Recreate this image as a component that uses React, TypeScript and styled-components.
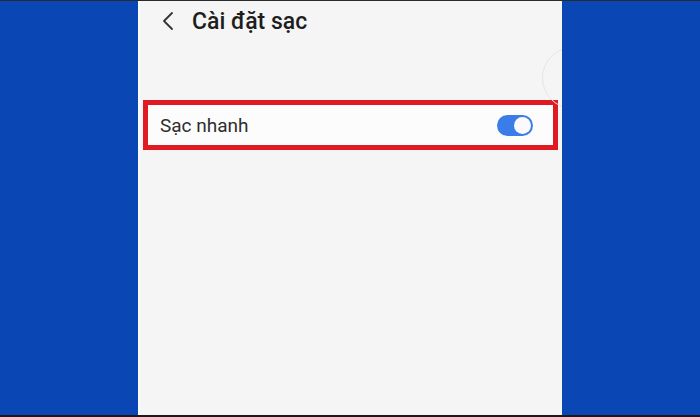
import React from "react";
import styled, { createGlobalStyle } from "styled-components";

const Global = createGlobalStyle`
  html, body { margin: 0; padding: 0; }
  body { background: #0b47b4; font-family: Roboto, "Noto Sans", Arial, sans-serif; }
`;

const Stage = styled.div`
  width: 700px;
  height: 417px;
  background: #0b47b4;
  display: flex;
  justify-content: center;
  box-sizing: border-box;
  border-bottom: 2px solid #1a1a1a;
  border-top: 1px solid #2a2a2a;
`;

const Phone = styled.div`
  position: relative;
  width: 424px;
  background: #f5f5f5;
  border-left: 2px solid #fbfbfb;
  box-sizing: border-box;
  display: flex;
  flex-direction: column;
  overflow: hidden;
`;

const Header = styled.div`
  display: flex;
  align-items: center;
  height: 40px;
  padding-left: 22px;
  gap: 18px;
`;

const Title = styled.h1`
  margin: 0;
  font-family: Roboto, "Noto Sans", sans-serif;
  font-weight: 500;
  font-size: 23px;
  color: #1e1e1e;
`;

const Body = styled.div`
  padding: 59px 4px 0 3px;
`;

const Highlight = styled.div`
  border: 5px solid #df1a22;
  height: 50px;
  box-sizing: border-box;
  background: #fcfcfc;
  display: flex;
  align-items: center;
  justify-content: space-between;
  padding: 0 20px 0 12px;
`;

const Label = styled.span`
  font-family: Roboto, "Noto Sans", sans-serif;
  font-size: 19px;
  color: #2e2e2e;
`;

const Toggle = styled.div`
  width: 36px;
  height: 21px;
  border-radius: 11px;
  background: #3b7de8;
  position: relative;
`;

const Knob = styled.div`
  position: absolute;
  right: 2px;
  top: 2px;
  width: 17px;
  height: 17px;
  border-radius: 50%;
  background: #fafafa;
`;

const Ghost = styled.div`
  position: absolute;
  right: -42px;
  top: 46px;
  width: 60px;
  height: 60px;
  border-radius: 50%;
  border: 1px solid #e6e6e6;
`;

export default function App() {
  return (
    <>
      <Global />
      <Stage>
        <Phone>
          <Ghost />
          <Header>
            <svg width="12" height="20" viewBox="0 0 12 20">
              <path d="M10 2 L2 10 L10 18" fill="none" stroke="#333" strokeWidth="1.8" strokeLinecap="round" strokeLinejoin="round" />
            </svg>
            <Title>Cài đặt sạc</Title>
          </Header>
          <Body>
            <Highlight>
              <Label>Sạc nhanh</Label>
              <Toggle>
                <Knob />
              </Toggle>
            </Highlight>
          </Body>
        </Phone>
      </Stage>
    </>
  );
}
